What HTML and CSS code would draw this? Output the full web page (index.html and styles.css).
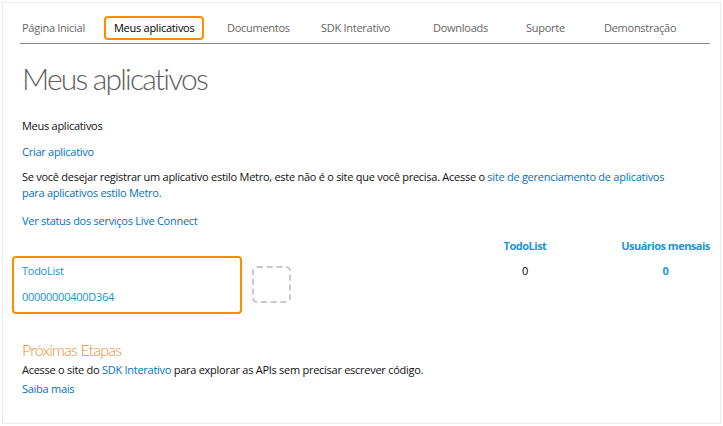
FILE: index.html
```html
<!DOCTYPE html>
<html lang="pt-BR">
<head>
<meta charset="utf-8">
<title>Meus aplicativos</title>
<link rel="stylesheet" href="styles.css">
</head>
<body>
<div class="frame">
  <nav class="nav">
    <a class="nav-item" href="#">Página Inicial</a>
    <a class="nav-item active" href="#"><span class="active-box">Meus aplicativos</span></a>
    <a class="nav-item" href="#">Documentos</a>
    <a class="nav-item" href="#">SDK Interativo</a>
    <a class="nav-item" href="#">Downloads</a>
    <a class="nav-item" href="#">Suporte</a>
    <a class="nav-item" href="#">Demonstração</a>
  </nav>

  <h1 class="title">Meus aplicativos</h1>

  <p class="line sub">Meus aplicativos</p>
  <p class="line create"><a href="#">Criar aplicativo</a></p>
  <p class="para">Se você desejar registrar um aplicativo estilo Metro, este não é o site que você precisa. Acesse o <a href="#">site de gerenciamento de aplicativos<br>para aplicativos estilo Metro.</a></p>
  <p class="line status"><a href="#">Ver status dos serviços Live Connect</a></p>

  <div class="apps">
    <div></div>
    <div class="th">TodoList</div>
    <div class="th">Usuários mensais</div>

    <div class="app-cell">
      <div class="app-box">
        <a class="app-name" href="#">TodoList</a>
        <a class="app-id" href="#">00000000400D364</a>
      </div>
      <div class="app-icon"></div>
    </div>
    <div class="td">0</div>
    <div class="td blue">0</div>
  </div>

  <h2 class="next">Próximas Etapas</h2>
  <p class="line acesse">Acesse o site do <a href="#">SDK Interativo</a> para explorar as APIs sem precisar escrever código.</p>
  <p class="line saiba"><a href="#">Saiba mais</a></p>
</div>
</body>
</html>
```

FILE: styles.css
```css
* { box-sizing: border-box; }
html, body { margin: 0; padding: 0; background: #fff; }
body {
  font-family: "Open Sans", "Noto Sans", sans-serif;
  font-size: 11px;
  letter-spacing: -0.27px;
  color: #111;
}
a { color: #0072c6; text-decoration: none; }

.frame {
  margin: 2px;
  height: 422px;
  border: 1px solid #ebebeb;
  padding: 0 10px 0 17px;
}

.nav {
  display: grid;
  grid-template-columns: 92px 113px 94px 112px 93px 78px 1fr;
  padding: 17px 0 7px 2px;
  border-bottom: 1px solid #8a8a8a;
  line-height: 16px;
}
.nav-item { color: #666; white-space: nowrap; }
.nav-item.active { color: #000; }
.active-box {
  display: inline-block;
  margin: -4px 0 -4px -10px;
  padding: 2px 8px;
  border: 2px solid #ff8c00;
  border-radius: 4px;
}

.title {
  margin: 16px 0 0 2px;
  font-family: "Lato", "Open Sans", sans-serif;
  font-size: 30px;
  letter-spacing: -1.8px;
  line-height: 36px;
  font-weight: 300;
  color: #606060;
}

p { margin: 0; }
.line, .para { line-height: 16px; padding-left: 2px; }
.sub { margin-top: 22px; }
.create { margin-top: 10px; }
.para { margin-top: 9px; }
.status { margin-top: 12px; }

.apps {
  display: grid;
  grid-template-columns: 1fr 100px 89px;
  column-gap: 46px;
  margin-top: 9px;
  line-height: 16px;
}
.th {
  text-align: center;
  font-weight: 700;
  letter-spacing: -0.5px;
  color: #1a96d4;
  white-space: nowrap;
}
.app-cell {
  display: flex;
  align-items: flex-start;
  margin-top: 2px;
  margin-left: -8px;
}
.app-box {
  width: 230px;
  height: 58px;
  border: 2px solid #ff8c00;
  border-radius: 4px;
  padding: 5px 8px 7px 8px;
  display: flex;
  flex-direction: column;
  gap: 10px;
}
.app-name, .app-id { color: #1a90cc; }
.app-icon {
  margin: 10px 0 0 10px;
  width: 39px;
  height: 37px;
  border: 2px dashed #c8c8c8;
  border-radius: 5px;
}
.td {
  text-align: center;
  padding-top: 9px;
  color: #000;
}
.td.blue { color: #1a96d4; font-weight: 700; }

.next {
  margin: 26px 0 0 2px;
  font-family: "Lato", "Open Sans", sans-serif;
  font-size: 16px;
  letter-spacing: -0.8px;
  line-height: 20px;
  font-weight: 300;
  color: #ec8a33;
}
.acesse { margin-top: 2px; }
.saiba { margin-top: 3px; }
```
